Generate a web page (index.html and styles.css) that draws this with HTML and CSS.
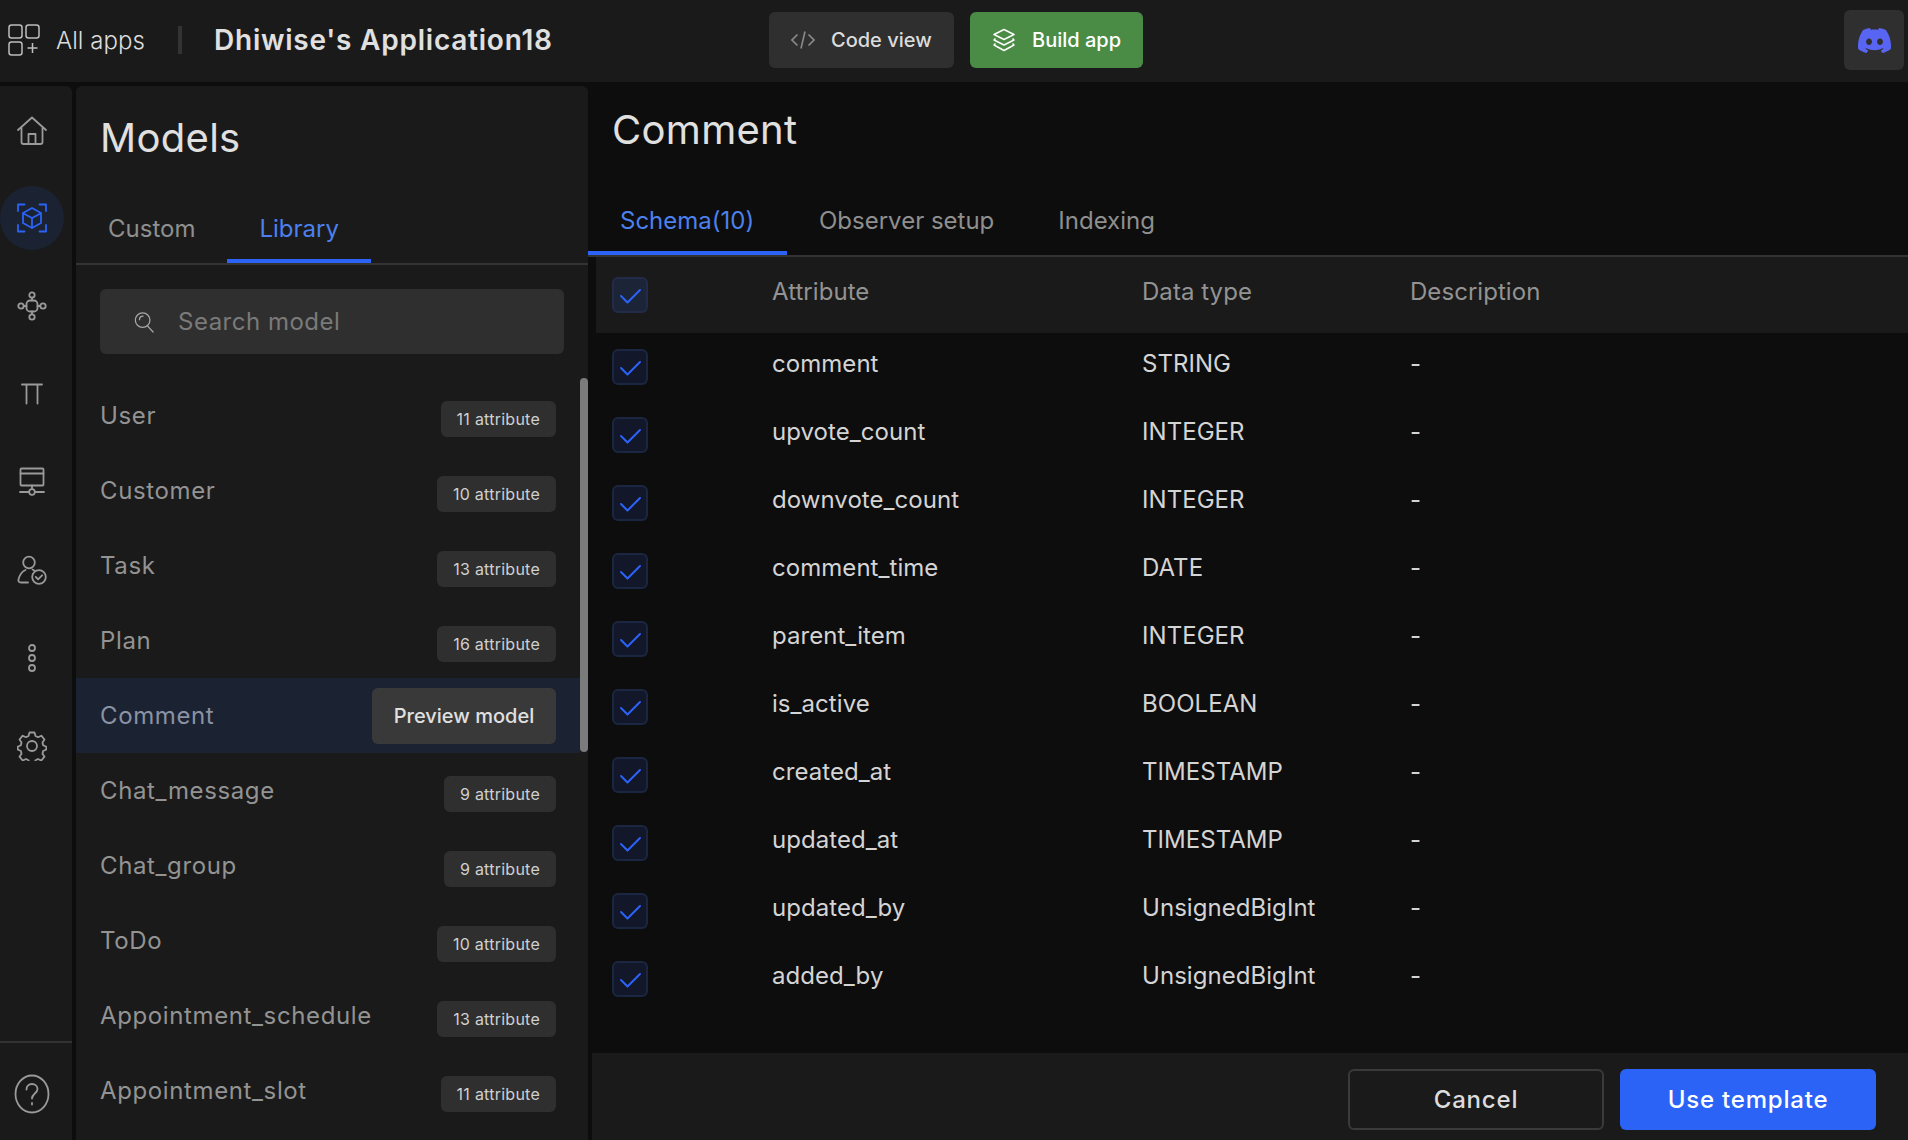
FILE: index.html
```html
<!DOCTYPE html>
<html lang="en">
<head>
<meta charset="utf-8">
<title>Models</title>
<link rel="stylesheet" href="styles.css">
</head>
<body>
<svg class="defs" width="0" height="0" aria-hidden="true">
  <symbol id="chk" viewBox="0 0 36 36"><path d="M9 19l6.5 6.5L28 13" fill="none" stroke="#2b63f6" stroke-width="2" stroke-linecap="round" stroke-linejoin="round"/></symbol>
</svg>
<header class="topbar">
  <a class="allapps">
    <svg class="ic-apps" viewBox="0 0 32 32" fill="none" stroke="#bdbdbd" stroke-width="1.5"><rect x="1" y="1" width="13" height="13" rx="2.5"/><rect x="18" y="1" width="13" height="13" rx="2.5"/><rect x="1" y="18" width="13" height="13" rx="2.5"/><path d="M24.5 19v10M19.5 24h10"/></svg>
    <span>All apps</span>
  </a>
  <span class="sep"></span>
  <h1 class="apptitle">Dhiwise's Application18</h1>
  <div class="actions">
    <button class="btn btn-code">
      <svg class="ic-btn" viewBox="0 0 24 24" fill="none" stroke="#8a8a8a" stroke-width="1.6"><path d="M6.5 6.5L1 12l5.5 5.5M17.5 6.5L23 12l-5.500 5.500M14 3.500L10 20.500"/></svg>
      <span>Code view</span>
    </button>
    <button class="btn btn-build">
      <svg class="ic-btn" viewBox="0 0 24 24" fill="none" stroke="#fff" stroke-width="1.500" stroke-linejoin="round"><path d="M12 1.500L22 6.500 12 11.500 2 6.500z"/><path d="M3.500 10.500L2 12l10 5 10-5-1.500-1.500"/><path d="M3.500 15.500L2 17l10 5.500L22 17l-1.500-1.500"/></svg>
      <span>Build app</span>
    </button>
  </div>
  <div class="discord">
    <svg viewBox="0 0 24 24" class="ic-discord"><path fill="#5865f2" d="M20.317 4.3698a19.7913 19.7913 0 00-4.8851-1.5152.0741.0741 0 00-.0785.0371c-.211.3753-.4447.8648-.6083 1.2495-1.8447-.2762-3.68-.2762-5.4868 0-.1636-.3933-.4058-.8742-.6177-1.2495a.077.077 0 00-.0785-.037 19.7363 19.7363 0 00-4.8852 1.515.0699.0699 0 00-.0321.0277C.5334 9.0458-.319 13.5799.0992 18.0578a.0824.0824 0 00.0312.0561c2.0528 1.5076 4.0413 2.4228 5.9929 3.0294a.0777.0777 0 00.0842-.0276c.4616-.6304.8731-1.2952 1.226-1.9942a.076.076 0 00-.0416-.1057c-.6528-.2476-1.2743-.5495-1.8722-.8923a.077.077 0 01-.0076-.1277c.1258-.0943.2517-.1923.3718-.2914a.0743.0743 0 01.0776-.0105c3.9278 1.7933 8.18 1.7933 12.0614 0a.0739.0739 0 01.0785.0095c.1202.099.246.1981.3728.2924a.077.077 0 01-.0066.1276 12.2986 12.2986 0 01-1.873.8914.0766.0766 0 00-.0407.1067c.3604.698.7719 1.3628 1.225 1.9932a.076.076 0 00.0842.0286c1.961-.6067 3.9495-1.5219 6.0023-3.0294a.077.077 0 00.0313-.0552c.5004-5.177-.8382-9.6739-3.5485-13.6604a.061.061 0 00-.0312-.0286zM8.02 15.3312c-1.1825 0-2.1569-1.0857-2.1569-2.419 0-1.3332.9555-2.4189 2.157-2.4189 1.2108 0 2.1757 1.0952 2.1568 2.419 0 1.3332-.9555 2.4189-2.1569 2.4189zm7.9748 0c-1.1825 0-2.1569-1.0857-2.1569-2.419 0-1.3332.9554-2.4189 2.1569-2.4189 1.2108 0 2.1757 1.0952 2.1568 2.419 0 1.3332-.946 2.4189-2.1568 2.4189Z"/></svg>
  </div>
</header>

<div class="workspace">
  <nav class="rail">
    <div class="rail-items">
      <div class="rail-item"><svg viewBox="0 0 30 30" class="ic-rail"><path d="M1 15L15 2.500 29 15M4.500 12.500V27a2 2 0 002 2h17a2 2 0 002-2V12.500M11.500 29v-10h7v10"/></svg></div>
      <div class="rail-item is-active"><svg viewBox="0 0 30 30" class="ic-rail ic-blue"><path d="M1 8V1.500h6.500M22.500 1.500H29V8M29 22v6.500h-6.500M7.500 28.500H1V22"/><path d="M15 5l9 5v10l-9 5-9-5V10z"/><path d="M6.500 10.500L15 15l8.500-4.500M15 15v9.500"/></svg></div>
      <div class="rail-item"><svg viewBox="0 0 30 30" class="ic-rail"><rect x="9.500" y="9.500" width="11" height="11" rx="3.500"/><circle cx="15" cy="4" r="2.700"/><circle cx="15" cy="26" r="2.700"/><circle cx="4" cy="15" r="2.700"/><circle cx="26" cy="15" r="2.700"/><path d="M15 6.700v2.800M15 20.500v2.800M6.700 15h2.800M20.500 15h2.800"/></svg></div>
      <div class="rail-item"><svg viewBox="0 0 30 30" class="ic-rail"><path d="M5 5.500h20M9.500 5.500v19M20.500 5.500v19"/></svg></div>
      <div class="rail-item"><svg viewBox="0 0 30 30" class="ic-rail"><rect x="3.500" y="1.500" width="23" height="17" rx="1"/><path d="M3.500 6.500h23M15 18.500v3M3 25h8.500M18.500 25H27"/><circle cx="15" cy="25" r="2.800"/></svg></div>
      <div class="rail-item"><svg viewBox="0 0 30 30" class="ic-rail"><circle cx="12" cy="7.500" r="5.800"/><path d="M11 27.500H4c-2 0-3-1-2.500-3 1-4 3.500-8 7-9.500"/><path d="M15.500 14.500c1 .5 2 1 2.500 1.500"/><circle cx="22" cy="22" r="6.800"/><path d="M18.800 22l2.300 2.300 4-4"/></svg></div>
      <div class="rail-item"><svg viewBox="0 0 30 30" class="ic-rail"><circle cx="15" cy="5" r="3"/><circle cx="15" cy="15" r="3"/><circle cx="15" cy="25" r="3"/></svg></div>
      <div class="rail-item"><svg viewBox="0 0 30 30" class="ic-rail"><circle cx="15" cy="15" r="5"/><path d="M12.500 1.500h5l1 3.500 2.500 1.200 3.300-1.500 3.200 3.800-2 3 .6 2.700 3.200 1.500v2.800l-3.200 1.500-.6 2.700 2 3-3.200 3.800-3.300-1.500-2.500 1.200-1 3.100h-5l-1-3.100-2.500-1.200-3.300 1.500-3.200-3.800 2-3-.6-2.700-3.200-1.500v-2.800l3.200-1.500.6-2.700-2-3 3.200-3.800 3.300 1.500 2.500-1.200z"/></svg></div>
    </div>
    <div class="rail-foot">
      <svg viewBox="0 0 36 40" class="ic-help"><ellipse cx="18" cy="20" rx="16.500" ry="18.500"/><path d="M12.500 15.500c0-3.500 2.500-5.500 5.500-5.500s5.500 2 5.500 5c0 4.500-5.500 4.500-5.500 9.500"/><path d="M18 29v1.500"/></svg>
    </div>
  </nav>

  <aside class="panel">
    <h2 class="panel-title">Models</h2>
    <div class="tabs panel-tabs">
      <span class="tab tab-custom">Custom</span>
      <span class="tab tab-lib is-on">Library</span>
    </div>
    <div class="search">
      <svg viewBox="0 0 22 24" class="ic-search"><circle cx="9.500" cy="10" r="8"/><path d="M6 9.500c0-2.500 1.500-4 4-4M15 16.500l6 6.500"/></svg>
      <span>Search model</span>
    </div>
    <div class="list-wrap">
      <ul class="list">
        <li class="row"><span>User</span><em class="badge">11 attribute</em></li>
        <li class="row"><span>Customer</span><em class="badge">10 attribute</em></li>
        <li class="row"><span>Task</span><em class="badge">13 attribute</em></li>
        <li class="row"><span>Plan</span><em class="badge">16 attribute</em></li>
        <li class="row is-sel"><span>Comment</span><button class="preview">Preview model</button></li>
        <li class="row"><span>Chat_message</span><em class="badge">9 attribute</em></li>
        <li class="row"><span>Chat_group</span><em class="badge">9 attribute</em></li>
        <li class="row"><span>ToDo</span><em class="badge">10 attribute</em></li>
        <li class="row"><span>Appointment_schedule</span><em class="badge">13 attribute</em></li>
        <li class="row"><span>Appointment_slot</span><em class="badge">11 attribute</em></li>
      </ul>
      <div class="track"><div class="thumb"></div></div>
    </div>
  </aside>

  <main class="main">
    <h2 class="main-title">Comment</h2>
    <div class="tabs main-tabs">
      <span class="tab mtab-schema is-on">Schema(10)</span>
      <span class="tab mtab">Observer setup</span>
      <span class="tab mtab">Indexing</span>
    </div>
    <div class="table">
      <div class="tr th">
        <span class="box box-head"><svg><use href="#chk"/></svg></span><span>Attribute</span><span>Data type</span><span>Description</span>
      </div>
      <div class="tr"><span class="box"><svg><use href="#chk"/></svg></span><span class="name">comment</span><span>STRING</span><span>-</span></div>
      <div class="tr"><span class="box"><svg><use href="#chk"/></svg></span><span class="name">upvote_count</span><span>INTEGER</span><span>-</span></div>
      <div class="tr"><span class="box"><svg><use href="#chk"/></svg></span><span class="name">downvote_count</span><span>INTEGER</span><span>-</span></div>
      <div class="tr"><span class="box"><svg><use href="#chk"/></svg></span><span class="name">comment_time</span><span>DATE</span><span>-</span></div>
      <div class="tr"><span class="box"><svg><use href="#chk"/></svg></span><span class="name">parent_item</span><span>INTEGER</span><span>-</span></div>
      <div class="tr"><span class="box"><svg><use href="#chk"/></svg></span><span class="name">is_active</span><span>BOOLEAN</span><span>-</span></div>
      <div class="tr"><span class="box"><svg><use href="#chk"/></svg></span><span class="name">created_at</span><span>TIMESTAMP</span><span>-</span></div>
      <div class="tr"><span class="box"><svg><use href="#chk"/></svg></span><span class="name">updated_at</span><span>TIMESTAMP</span><span>-</span></div>
      <div class="tr"><span class="box"><svg><use href="#chk"/></svg></span><span class="name">updated_by</span><span>UnsignedBigInt</span><span>-</span></div>
      <div class="tr"><span class="box"><svg><use href="#chk"/></svg></span><span class="name">added_by</span><span>UnsignedBigInt</span><span>-</span></div>
    </div>
    <footer class="foot">
      <button class="fbtn fbtn-cancel">Cancel</button>
      <button class="fbtn fbtn-use">Use template</button>
    </footer>
  </main>
</div>
</body>
</html>
```
FILE: styles.css
```css
* { box-sizing: border-box; }
html, body { margin: 0; height: 1140px; overflow: hidden; }
body {
  background: #0d0d0d;
  color: #e0e0e0;
  font-family: Inter, "Noto Sans", sans-serif;
  display: flex;
  flex-direction: column;
}
h1, h2, ul { margin: 0; padding: 0; }
em { font-style: normal; }
button { font-family: inherit; border: 0; cursor: pointer; }
.defs { position: absolute; }

.topbar {
  height: 82px;
  flex: none;
  background: #1a1a1a;
  display: flex;
  align-items: center;
  padding: 0 4px 2px 8px;
}
.allapps { display: flex; align-items: center; gap: 16px; font-size: 24px; font-weight: 350; color: #dcdcdc; width: 170px; letter-spacing: .05px; }
.ic-apps { width: 32px; height: 32px; flex: none; }
.sep { width: 4px; height: 28px; background: #333; flex: none; margin-right: 32px; }
.apptitle { font-size: 28px; font-weight: 600; color: #e0e0e0; letter-spacing: .77px; width: 555px; flex: none; }
.actions { display: flex; gap: 16px; }
.btn {
  height: 56px;
  border-radius: 6px;
  display: flex;
  align-items: center;
  font-size: 20px;
  font-weight: 450;
}
.btn-code { width: 185px; background: #2f2f2f; color: #dcdcdc; padding-left: 22px; gap: 16px; }
.btn-build { width: 173px; background: #4a8c45; color: #fff; padding-left: 22px; gap: 16px; }
.ic-btn { width: 24px; height: 24px; flex: none; }
.discord {
  margin-left: auto;
  width: 60px;
  height: 60px;
  background: #2f2f2f;
  border-radius: 6px;
  display: flex;
  align-items: center;
  justify-content: center;
}
.ic-discord { width: 33px; height: 33px; }

.workspace { flex: 1; display: flex; min-height: 0; padding-top: 4px; }

.rail {
  width: 72px;
  flex: none;
  background: #1a1a1a;
  border-radius: 0 6px 0 0;
  display: flex;
  flex-direction: column;
  justify-content: space-between;
}
.rail-items { padding-top: 12px; display: flex; flex-direction: column; gap: 24px; width: 64px; }
.rail-item { width: 64px; height: 64px; display: flex; align-items: center; justify-content: center; border-radius: 50%; }
.rail-item.is-active { background: #1b2232; }
.ic-rail { width: 30px; height: 30px; fill: none; stroke: #9a9a9a; stroke-width: 1.8; stroke-linecap: round; stroke-linejoin: round; }
.ic-blue { stroke: #2b63f6; }
.rail-foot { height: 99px; border-top: 2px solid #333; padding: 31px 0 0 14px; }
.ic-help { width: 36px; height: 40px; fill: none; stroke: #9a9a9a; stroke-width: 1.800; stroke-linecap: round; }

.panel {
  width: 512px;
  flex: none;
  margin-left: 4px;
  background: #1a1a1a;
  border-radius: 6px 6px 0 0;
  display: flex;
  flex-direction: column;
  min-height: 0;
}
.panel-title { font-size: 40px; font-weight: 430; letter-spacing: .3px; line-height: 48px; color: #e0e0e0; margin: 28px 0 0 24px; }
.tabs { display: flex; }
.panel-tabs { margin-top: 38px; height: 65px; border-bottom: 2px solid #333; }
.tab { font-size: 24px; color: #8f8f8f; display: block; }
.tab-custom { padding: 14px 32px; line-height: 30px; }
.tab-lib { padding: 14px 32px; line-height: 30px; }
.is-on { color: #4c80ee; border-bottom: 4px solid #2b63f6; }
.tab-lib.is-on { height: 63px; }
.search {
  margin: 24px 24px 0;
  height: 65px;
  flex: none;
  background: #2f2f2f;
  border-radius: 6px;
  display: flex;
  align-items: center;
  gap: 24px;
  padding-left: 34px;
  font-size: 24px;
  color: #7a7a7a;
  letter-spacing: .5px;
}
.ic-search { width: 20px; height: 22px; fill: none; stroke: #a8a8a8; stroke-width: 1.400; stroke-linecap: round; flex: none; }

.list-wrap { flex: 1; min-height: 0; margin-top: 24px; display: flex; overflow: hidden; }
.list { list-style: none; flex: 1; min-width: 0; }
.row {
  height: 75px;
  display: flex;
  align-items: center;
  justify-content: space-between;
  padding: 0 24px;
  font-size: 24px;
  letter-spacing: .62px;
  color: #939393;
  font-weight: 380;
}
.is-sel { background: #1b2232; color: #8a92a3; }
.badge {
  height: 36px;
  margin-top: 7px;
  padding: 0 16px;
  display: flex;
  align-items: center;
  background: #2f2f2f;
  border-radius: 6px;
  font-size: 16px;
  letter-spacing: .25px;
  color: #d0d0d0;
}
.preview {
  width: 184px;
  height: 56px;
  background: #393939;
  border-radius: 6px;
  color: #e0e0e0;
  font-size: 20px;
  font-weight: 450;
}
.track { width: 8px; flex: none; }
.thumb { height: 374px; background: #7b7b7b; border-radius: 4px; }

.main { flex: 1; min-width: 0; display: flex; flex-direction: column; }
.main-title { font-size: 40px; font-weight: 430; letter-spacing: .3px; line-height: 48px; color: #e0e0e0; margin: 20px 0 0 24px; }
.main-tabs { margin-top: 40px; height: 63px; flex: none; border-bottom: 2px solid #333; }
.mtab-schema { padding: 12px 32px; line-height: 30px; width: 199px; height: 61px; white-space: nowrap; }
.mtab { padding: 12px 32px; line-height: 30px; }
.table { margin-left: 8px; flex: 1; min-height: 0; font-size: 24px; color: #d4d4d4; letter-spacing: .05px; font-weight: 380; }
.tr {
  display: grid;
  grid-template-columns: 160px 370px 268px 1fr;
  align-items: center;
  height: 68px;
  padding-left: 16px;
}
.tr > span:not(.box) { padding-bottom: 8px; }
.th { height: 76px; background: #1a1a1a; color: #939393; }
.box {
  width: 36px;
  height: 36px;
  border: 2px solid #1b2642;
  background: #121829;
  border-radius: 6px;
  display: block;
}
.box-head { background: #1c2438; border-color: #222c4a; }
.box svg { display: block; width: 36px; height: 36px; margin: -2px; }

.foot {
  margin-left: 4px;
  height: 87px;
  flex: none;
  background: #1a1a1a;
  display: flex;
  justify-content: flex-end;
  gap: 16px;
  padding: 16px 32px 0 0;
}
.fbtn { width: 256px; height: 61px; border-radius: 6px; font-size: 24px; font-weight: 450; letter-spacing: .8px; }
.fbtn-cancel { background: transparent; border: 2px solid #3a3a3a; color: #dcdcdc; }
.fbtn-use { background: #2b63f6; color: #fff; }
```
